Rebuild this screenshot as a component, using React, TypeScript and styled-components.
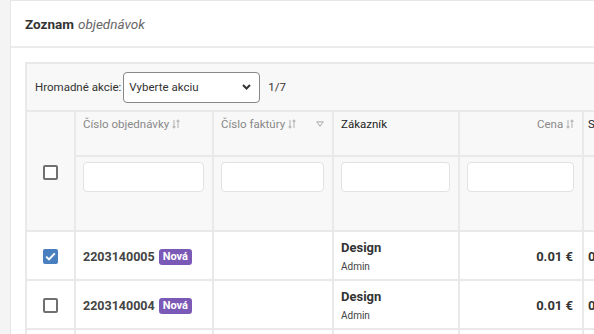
import styled, { createGlobalStyle } from 'styled-components';

const GlobalStyle = createGlobalStyle`
  html, body {
    margin: 0;
    padding: 0;
    background: #f4f4f4;
    font-family: Roboto, "Liberation Sans", Arial, sans-serif;
    overflow: hidden;
  }
`;

type Order = { id: string; customer: string; user: string; price: string; checked: boolean };

const orders: Order[] = [
  { id: '2203140005', customer: 'Design', user: 'Admin', price: '0.01 €', checked: true },
  { id: '2203140004', customer: 'Design', user: 'Admin', price: '0.01 €', checked: false },
  { id: '2203140003', customer: 'Design', user: 'Admin', price: '0.01 €', checked: false },
];

function SortIcon() {
  return (
    <svg width="8" height="10" viewBox="0 0 8 10" fill="none" stroke="#b5b5b5" strokeWidth="1.1">
      <path d="M2 1v8M0.6 7.4L2 9l1.4-1.6" />
      <path d="M6 9V1M4.6 2.6L6 1l1.4 1.6" />
    </svg>
  );
}

function FilterIcon() {
  return (
    <svg width="8" height="6" viewBox="0 0 8 6" fill="none" stroke="#aaa" strokeWidth="1">
      <path d="M0.8 0.8h6.4L4 5.2z" />
    </svg>
  );
}

function Chevron() {
  return (
    <svg width="9" height="6" viewBox="0 0 9 6" fill="none" stroke="#333" strokeWidth="2">
      <path d="M1 1l3.5 3.5L8 1" />
    </svg>
  );
}

export default function App() {
  return (
    <Page>
      <GlobalStyle />
      <Card>
        <CardHeader>
          <strong>Zoznam</strong> <em>objednávok</em>
        </CardHeader>
        <CardBody>
          <TableWrap>
            <Toolbar>
              <span>Hromadné akcie:</span>
              <Select>
                <span>Vyberte akciu</span>
                <Chevron />
              </Select>
              <Counter>1/7</Counter>
            </Toolbar>
            <Table>
              <colgroup>
                <col style={{ width: 49 }} />
                <col style={{ width: 138 }} />
                <col style={{ width: 120 }} />
                <col style={{ width: 126 }} />
                <col style={{ width: 124 }} />
                <col style={{ width: 120 }} />
              </colgroup>
              <thead>
                <tr>
                  <CheckCell rowSpan={2}>
                    <Checkbox $checked={false} />
                  </CheckCell>
                  <Th>
                    Číslo objednávky <SortIcon />
                  </Th>
                  <Th>
                    <HeadSplit>
                      <span>
                        Číslo faktúry <SortIcon />
                      </span>
                      <FilterIcon />
                    </HeadSplit>
                  </Th>
                  <Th $dark>Zákazník</Th>
                  <Th $right>
                    Cena <SortIcon />
                  </Th>
                  <Th $dark>Stav</Th>
                </tr>
                <tr>
                  <FilterCell><FilterInput /></FilterCell>
                  <FilterCell><FilterInput /></FilterCell>
                  <FilterCell><FilterInput /></FilterCell>
                  <FilterCell><FilterInput /></FilterCell>
                  <FilterCell />
                </tr>
              </thead>
              <tbody>
                {orders.map((o) => (
                  <tr key={o.id}>
                    <Td $center>
                      <Checkbox $checked={o.checked}>
                        {o.checked && (
                          <svg width="11" height="9" viewBox="0 0 11 9" fill="none" stroke="#fff" strokeWidth="2">
                            <path d="M1.2 4.6l2.8 2.8L9.8 1.4" />
                          </svg>
                        )}
                      </Checkbox>
                    </Td>
                    <Td>
                      <OrderNo>{o.id}</OrderNo> <Badge>Nová</Badge>
                    </Td>
                    <Td />
                    <Td>
                      <Customer>{o.customer}</Customer>
                      <User>{o.user}</User>
                    </Td>
                    <Td $right>
                      <Price>{o.price}</Price>
                    </Td>
                    <Td $last>
                      <Price>0</Price>
                    </Td>
                  </tr>
                ))}
              </tbody>
            </Table>
          </TableWrap>
        </CardBody>
      </Card>
    </Page>
  );
}

const Page = styled.div`
  padding: 0 0 0 10px;
  height: 334px;
  overflow: hidden;
`;

const Card = styled.div`
  background: #fff;
  border: 1px solid #e6e6e6;
  border-right: none;
  width: 584px;
  height: 400px;
  overflow: hidden;
`;

const CardHeader = styled.div`
  height: 45px;
  padding: 0 14px;
  display: flex;
  align-items: center;
  gap: 4px;
  border-bottom: 2px solid #ececec;
  font-size: 13.5px;
  color: #333;

  strong {
    font-weight: 700;
  }
  em {
    color: #666;
    font-style: italic;
  }
`;

const CardBody = styled.div`
  padding: 14px 0 0 14px;
`;

const TableWrap = styled.div`
  background: #f8f8f8;
  border-top: 2px solid #e8e8e8;
  border-left: 2px solid #e8e8e8;
  width: 700px;
`;

const Toolbar = styled.div`
  height: 46px;
  display: flex;
  align-items: center;
  gap: 2px;
  padding-left: 8px;
  font-size: 11.5px;
  color: #333;
`;

const Counter = styled.span`
  margin-left: 6px;
`;

const Select = styled.div`
  width: 137px;
  height: 31px;
  box-sizing: border-box;
  border: 1px solid #888;
  border-radius: 4px;
  background: #fff;
  display: flex;
  align-items: center;
  justify-content: space-between;
  padding: 0 8px 0 5px;
  font-size: 11.5px;
  color: #333;
`;

const Table = styled.table`
  border-collapse: collapse;
  table-layout: fixed;
  width: 677px;
  margin-left: -2px;

  td, th {
    border: 2px solid #e9e9e9;
  }
`;

const Th = styled.th<{ $dark?: boolean; $right?: boolean }>`
  height: 38px;
  padding: 5px 8px 0 7px;
  vertical-align: top;
  text-align: ${(p) => (p.$right ? 'right' : 'left')};
  font-size: 11.5px;
  font-weight: 400;
  color: ${(p) => (p.$dark ? '#222' : '#888')};
  white-space: nowrap;
  overflow: hidden;

  &:last-child {
    padding-left: 4px;
  }

  svg {
    vertical-align: -1px;
  }
`;

const HeadSplit = styled.div`
  display: flex;
  justify-content: space-between;
  align-items: center;
`;

const CheckCell = styled.th`
  text-align: center;
  vertical-align: middle;
`;

const FilterCell = styled.td`
  height: 68px;
  padding: 5px 8px 0 7px;
  vertical-align: top;
`;

const FilterInput = styled.div`
  height: 30px;
  box-sizing: border-box;
  background: #fff;
  border: 1px solid #e2e2e2;
  border-radius: 4px;
`;

const Td = styled.td<{ $center?: boolean; $right?: boolean; $last?: boolean }>`
  height: 47px;
  padding: 0 ${(p) => (p.$right ? 9 : 7)}px 0 ${(p) => (p.$last ? 4 : 7)}px;
  background: #fff;
  vertical-align: middle;
  text-align: ${(p) => (p.$center ? 'center' : p.$right ? 'right' : 'left')};
  white-space: nowrap;
`;

const Checkbox = styled.span<{ $checked: boolean }>`
  display: inline-flex;
  align-items: center;
  justify-content: center;
  width: 15px;
  height: 15px;
  box-sizing: border-box;
  border-radius: 2px;
  border: ${(p) => (p.$checked ? 'none' : '2px solid #707070')};
  background: ${(p) => (p.$checked ? '#4a7fbf' : '#fff')};
  vertical-align: middle;
`;

const OrderNo = styled.span`
  font-size: 12.5px;
  font-weight: 700;
  color: #444;
`;

const Badge = styled.span`
  display: inline-block;
  background: #7b59b6;
  color: #fff;
  font-size: 11px;
  font-weight: 700;
  padding: 1px 4px 2px;
  border-radius: 3px;
  vertical-align: 1px;
`;

const Customer = styled.div`
  font-size: 13px;
  font-weight: 700;
  color: #333;
  margin-top: 1px;
`;

const User = styled.div`
  font-size: 10px;
  color: #444;
  margin-top: 6px;
`;

const Price = styled.span`
  font-size: 13px;
  font-weight: 700;
  color: #333;
`;
